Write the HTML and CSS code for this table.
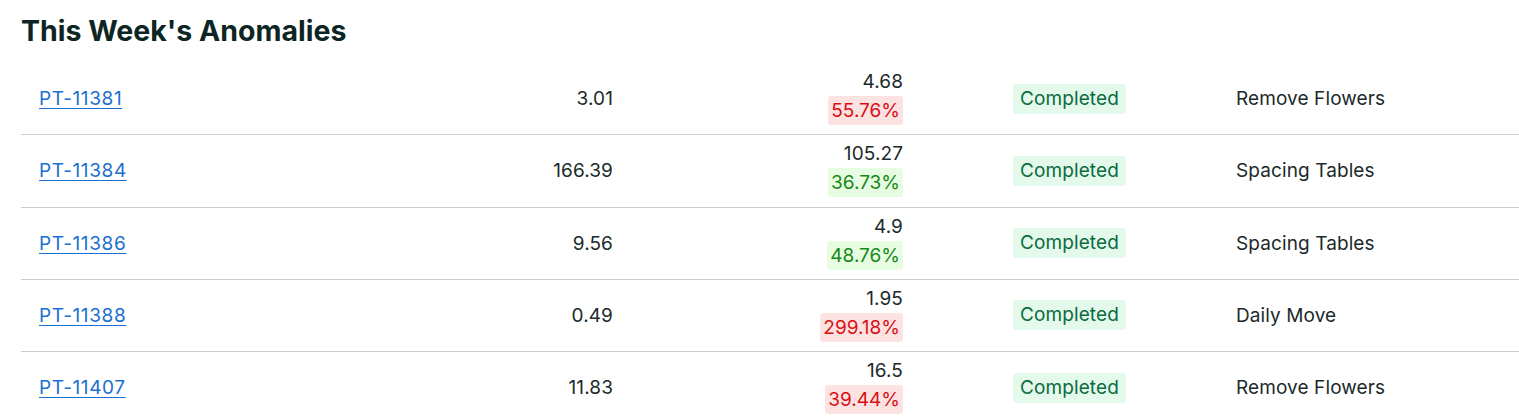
FILE: index.html
```html
<!DOCTYPE html>
<html>
<head>
<meta charset="utf-8">
<link rel="stylesheet" href="styles.css">
</head>
<body>
<section class="panel">
  <h2 class="title">This Week's Anomalies</h2>
  <div class="table">
    <div class="row">
      <div class="cell id"><a href="#">PT-11381</a></div>
      <div class="cell num">3.01</div>
      <div class="cell num"><div class="val">4.68</div><span class="pct bad">55.76%</span></div>
      <div class="cell status"><span class="badge">Completed</span></div>
      <div class="cell task">Remove Flowers</div>
    </div>
    <div class="row">
      <div class="cell id"><a href="#">PT-11384</a></div>
      <div class="cell num">166.39</div>
      <div class="cell num"><div class="val">105.27</div><span class="pct good">36.73%</span></div>
      <div class="cell status"><span class="badge">Completed</span></div>
      <div class="cell task">Spacing Tables</div>
    </div>
    <div class="row">
      <div class="cell id"><a href="#">PT-11386</a></div>
      <div class="cell num">9.56</div>
      <div class="cell num"><div class="val">4.9</div><span class="pct good">48.76%</span></div>
      <div class="cell status"><span class="badge">Completed</span></div>
      <div class="cell task">Spacing Tables</div>
    </div>
    <div class="row">
      <div class="cell id"><a href="#">PT-11388</a></div>
      <div class="cell num">0.49</div>
      <div class="cell num"><div class="val">1.95</div><span class="pct bad">299.18%</span></div>
      <div class="cell status"><span class="badge">Completed</span></div>
      <div class="cell task">Daily Move</div>
    </div>
    <div class="row">
      <div class="cell id"><a href="#">PT-11407</a></div>
      <div class="cell num">11.83</div>
      <div class="cell num"><div class="val">16.5</div><span class="pct bad">39.44%</span></div>
      <div class="cell status"><span class="badge">Completed</span></div>
      <div class="cell task">Remove Flowers</div>
    </div>
  </div>
</section>
</body>
</html>
```

FILE: styles.css
```css
* { box-sizing: border-box; }
body {
  margin: 0;
  font-family: Inter, "Noto Sans", sans-serif;
  color: #1b2a2a;
  background: #fff;
}
.panel {
  padding: 12px 0 0 21px;
}
.title {
  margin: 0 0 13px 0;
  font-size: 28.5px;
  font-weight: 700;
  color: #0d2624;
  line-height: 38px;
}
.table {
  display: flex;
  flex-direction: column;
}
.row {
  display: grid;
  grid-template-columns: 410px 200px 290px 297px 1fr;
  align-items: center;
  height: 72.25px;
  border-bottom: 1px solid #c9ced6;
  font-size: 19px;
  letter-spacing: 0.1px;
}
.cell {
  padding: 0 18px;
}
.num {
  text-align: right;
}
.val {
  line-height: 21px;
  margin-top: -1px;
}
.status {
  padding-left: 92px;
}
a {
  color: #1a6fd1;
  text-decoration: underline;
  text-decoration-thickness: 1px;
  text-underline-offset: 3px;
  letter-spacing: 0.6px;
}
.pct {
  display: inline-block;
  margin-top: 4px;
  padding: 3px 3px;
  border-radius: 3px;
  line-height: 23px;
  letter-spacing: 0;
}
.pct.bad {
  background: #fde2e2;
  color: #d90f12;
}
.pct.good {
  background: #e7fde1;
  color: #158a16;
}
.badge {
  display: inline-block;
  padding: 3px 7px;
  border-radius: 4px;
  background: #e2f9ec;
  color: #0c6a3e;
  line-height: 24px;
}
```
